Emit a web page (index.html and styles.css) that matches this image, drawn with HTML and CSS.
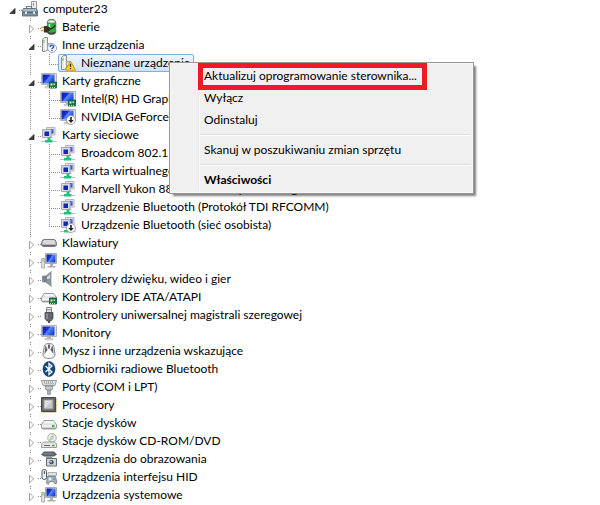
FILE: index.html
```html
<!DOCTYPE html>
<html lang="pl">
<head>
    <meta charset="UTF-8">
    <meta name="viewport" content="width=device-width, initial-scale=1.0">
    <title>Menedżer urządzeń</title>
    <link rel="stylesheet" href="styles.css">
</head>
<body>
    <!-- Icon sprite -->
    <svg class="sprite" aria-hidden="true">
        <defs>
            <linearGradient id="screen" x1="0" y1="0" x2="1" y2="0.6">
                <stop offset="0" stop-color="#0a1a9c"/>
                <stop offset="0.45" stop-color="#1633d8"/>
                <stop offset="0.55" stop-color="#5c8af5"/>
                <stop offset="1" stop-color="#1a3fe0"/>
            </linearGradient>
            <linearGradient id="metal" x1="0" y1="0" x2="0" y2="1">
                <stop offset="0" stop-color="#f4f4f4"/>
                <stop offset="1" stop-color="#a8a8a8"/>
            </linearGradient>
        </defs>
        <symbol id="arrow-closed" viewBox="0 0 8 10">
            <path d="M1.5 1v8l4-4z" fill="#fff" stroke="#a2a2a2"/>
        </symbol>
        <symbol id="arrow-open" viewBox="0 0 8 10">
            <path d="M6 2.500v5H1z" fill="#404040" stroke="#262626" stroke-width=".8"/>
        </symbol>
        <symbol id="tower" viewBox="0 0 16 16">
            <path d="M1.500 2.500l2-2h3v12l-2 2h-3z" fill="#e8e8e4" stroke="#8f8f8f"/>
            <path d="M4.500 2v11" stroke="#fff"/>
            <path d="M3 3v3" stroke="#63c043"/>
            <path d="M6.500 6.500h3.500v7H6.500z" fill="#d7d7d7" stroke="#999" stroke-width=".8"/>
        </symbol>
        <symbol id="monitor" viewBox="0 0 16 16">
            <path d="M.5.500h15v11H.5z" fill="#e4e4de" stroke="#b5b5ae"/>
            <path d="M1.500 1.500h12v9h-12z" fill="url(#screen)"/>
            <path d="M6 12h4v1.500H6z" fill="#aaa"/>
            <path d="M4 13.500h8v1.500H4z" fill="#ddd" stroke="#aaa" stroke-width=".5"/>
        </symbol>
        <symbol id="chip" viewBox="0 0 16 16">
            <path d="M8.500 9h7v6h-7z" fill="#187a4f" stroke="#0c5537" stroke-width=".8"/>
            <path d="M9.500 10.500h2v2h-2zM12.500 10.500h1.500v1.500h-1.500z" fill="#c6ecd6"/>
            <path d="M9 14.500h5" stroke="#e4d887" stroke-dasharray="1 1"/>
        </symbol>
        <symbol id="down" viewBox="0 0 16 16">
            <circle cx="11" cy="11" r="4.500" fill="#f7f7f7" stroke="#999" stroke-width=".8"/>
            <path d="M11 8v4" stroke="#222" stroke-width="1.600"/>
            <path d="M8.300 11h5.400L11 14z" fill="#222"/>
        </symbol>
        <symbol id="net" viewBox="0 0 16 16">
            <path d="M5.500.5h8.500v7.500h-8.500z" fill="#dedfe6" stroke="#b4b6c4"/>
            <path d="M7.500 2h5v4.500h-5z" fill="url(#screen)"/>
            <path d="M1.500 2.500h8.500v8H1.500z" fill="#d9dae0" stroke="#a6a8b4"/>
            <path d="M3.500 4.500h4.500V9H3.500z" fill="#1228b8"/>
            <path d="M9 9.500c0 1-1.500 1-2 1.500h5c-.5-.5-1-.5-1-1.500z" fill="#aaa"/>
            <path d="M6.500 10.500h3v2.500h2v2.500H4V13h2.500z" fill="#1fc27d"/>
            <path d="M0 14.500h4M11.500 14.500H15.500" stroke="#bcbcbc" stroke-width="1.200"/>
        </symbol>
        <symbol id="drive" viewBox="0 0 16 16">
            <path d="M3 5.500h9.500l3 4v3l-1 1.500h-13l-1-1.500v-3z" fill="url(#metal)" stroke="#858585" stroke-width=".8"/>
            <path d="M1 9.500h14v3H1z" fill="#f1f1f1"/>
            <path d="M3.500 6h8.500l2 2.500H1.700z" fill="#f5f5f5"/>
        </symbol>
        <symbol id="i-root" viewBox="0 0 16 16">
            <path d="M9.500.5h5v11h-5z" fill="#eee" stroke="#999"/>
            <path d="M11.500 2v3" stroke="#5bbd3c"/>
            <path d="M4.500 7V5.500h5v2" fill="none" stroke="#6d7a80" stroke-width="1.200"/>
            <path d="M1.500 7.500h12l2 2v5.500H.5V9.500z" fill="#78909d" stroke="#50636e" stroke-width=".8"/>
            <path d="M1.500 8.300h12l1 1.500H1z" fill="#b8cad3"/>
            <path d="M1 11.500h14" stroke="#566973"/>
            <path d="M3 10.500h2v2.500H3zM11 10.500h2v2.500h-2z" fill="#dbe4e8"/>
        </symbol>
        <symbol id="i-battery" viewBox="0 0 16 16">
            <path d="M7 1.500C7.500 0 13.500 0 14 1.500l.8 1.500v10.500c-1 2.300-7.300 2.300-8.500 0V3z" fill="#2fae3a" stroke="#4f6b4f" stroke-width=".8"/>
            <ellipse cx="10.500" cy="2.500" rx="3.600" ry="1.600" fill="#f0f0f0" stroke="#888" stroke-width=".6"/>
            <path d="M8.500 5v5" stroke="#d5f5d2" stroke-width="1.500"/>
            <path d="M6.500 12.500c1 1.500 6.500 1.500 8 0v1.500c-1.500 2-6.500 2-8 0z" fill="#444"/>
            <path d="M0 8.500h3M0 11.500h3" stroke="#d9a53c" stroke-width="1.300"/>
            <path d="M3 7h3l3 1.500v3L6 13.500H3z" fill="#3a3127"/>
            <path d="M8 10c3 0 5-1 6-4" fill="none" stroke="#2b2b2b" stroke-width="1.300"/>
        </symbol>
        <symbol id="i-other" viewBox="0 0 16 16">
            <use href="#tower"/>
            <circle cx="11" cy="11" r="4.500" fill="#f3f7fd" stroke="#8296b3" stroke-width=".8"/>
            <path d="M9.200 10c0-2.500 3.700-2.300 3.500-.3-.1 1.200-1.700 1-1.700 2.300M11 12.700v1.200" fill="none" stroke="#2356b8" stroke-width="1.400"/>
        </symbol>
        <symbol id="i-warning" viewBox="0 0 16 16">
            <use href="#tower"/>
            <path d="M10.500 6l5 9.200h-10z" fill="#fcd928" stroke="#c99a12" stroke-linejoin="round"/>
            <path d="M10.500 8.800v3.200M10.500 12.900v1.200" stroke="#332a00" stroke-width="1.300"/>
        </symbol>
        <symbol id="i-display" viewBox="0 0 16 16">
            <use href="#monitor"/>
            <use href="#chip"/>
        </symbol>
        <symbol id="i-display-off" viewBox="0 0 16 16">
            <use href="#monitor"/>
            <use href="#down"/>
        </symbol>
        <symbol id="i-net-off" viewBox="0 0 16 16">
            <use href="#net"/>
            <use href="#down"/>
        </symbol>
        <symbol id="i-keyboard" viewBox="0 0 16 16">
            <path d="M3 4.500h10c1.500 0 2.500 3 2.500 4.500 0 2-1 2.500-2 2.500h-11c-1 0-2-.5-2-2.500C.5 7.500 1.500 4.500 3 4.500z" fill="#b4b4be" stroke="#77777f"/>
            <path d="M3.500 5.500h9.500M2.500 6.500h11M2.500 7.500h11M2.500 8.500h11" stroke="#fff" stroke-dasharray="1 1"/>
            <path d="M1.500 10.500h13" stroke="#66666e"/>
        </symbol>
        <symbol id="i-computer" viewBox="0 0 16 16">
            <path d="M4.500.5h11v10h-11z" fill="#deded8" stroke="#aaaaa5"/>
            <path d="M5.500 1.500h9v8h-9z" fill="url(#screen)"/>
            <path d="M9 11h3v2H9zM6.500 13h8v1.500h-8z" fill="#aeb0ae"/>
            <path d="M.7 5.500h2.800V15H.7z" fill="#e7e7e7" stroke="#999" stroke-width=".8"/>
            <path d="M2 6.500v2" stroke="#50b53a"/>
        </symbol>
        <symbol id="i-speaker" viewBox="0 0 16 16">
            <path d="M1.500 5h3.500v6H1.500z" fill="#7c858d" stroke="#80878e" stroke-width=".8"/>
            <path d="M5 5l5.500-4.500v15L5 11z" fill="#8b949c" stroke="#6d757c" stroke-width=".8"/>
            <path d="M6 6l3-2.500v4L6 8z" fill="#d5dbe0"/>
            <path d="M10.500.5v15" stroke="#cad0d6"/>
        </symbol>
        <symbol id="i-ide" viewBox="0 0 16 16">
            <use href="#drive" y="-1"/>
            <use href="#chip"/>
        </symbol>
        <symbol id="i-usb" viewBox="0 0 16 16">
            <path d="M5.500.5h5v5h-5z" fill="#e8e8e8" stroke="#888"/>
            <path d="M7 2v1.500M9 2v1.500" stroke="#666"/>
            <path d="M4 5.500h8v6L10 14H6l-2-2.500z" fill="#62666b" stroke="#45484c" stroke-width=".8"/>
            <path d="M6 6.500V12" stroke="#a7abb0" stroke-width="1.200"/>
            <path d="M8 14v2" stroke="#555" stroke-width="2"/>
        </symbol>
        <symbol id="i-mouse" viewBox="0 0 16 16">
            <path d="M3 5C3 1 5.500.5 8 .5s5 .5 5 4.500l1 6c0 3-2 4.500-6 4.500S2 14 2 11z" fill="#eceef0" stroke="#6a6d73" stroke-width=".8"/>
            <path d="M4.500 2L6.500 7l-3 4zM11.500 2l-2 5 3 4z" fill="#5d6167"/>
            <path d="M8 1.500v4" stroke="#33363b" stroke-width="1.500"/>
            <ellipse cx="8" cy="11" rx="3" ry="3.500" fill="#fff"/>
        </symbol>
        <symbol id="i-bluetooth" viewBox="0 0 16 16">
            <ellipse cx="8" cy="8" rx="6" ry="7.500" fill="#0c4584" stroke="#082c5b" stroke-width=".6"/>
            <path d="M4.500 5l6.500 6-3 2.500v-11L11 5l-6.500 6" fill="none" stroke="#fff" stroke-width="1.300"/>
        </symbol>
        <symbol id="i-port" viewBox="0 0 16 16">
            <path d="M.5 1.500h15l-1.500 5h-12z" fill="#e1e4e6" stroke="#82888c" stroke-width=".8"/>
            <path d="M3 3h10M3.500 4.800h9" stroke="#777" stroke-dasharray="1 1"/>
            <path d="M4 7h8l-1 4H5z" fill="#c4c9cc" stroke="#81878b" stroke-width=".8"/>
            <path d="M6.500 11h3v4.500h-3z" fill="#a7adb1" stroke="#81878b" stroke-width=".6"/>
        </symbol>
        <symbol id="i-cpu" viewBox="0 0 16 16">
            <path d="M1.500 15.300h14M15.300 1.500v14" stroke="#d3a73a" stroke-width="1.400" stroke-dasharray="1 1"/>
            <path d="M.5.5h14v14H.5z" fill="#66696d" stroke="#44474a"/>
            <path d="M3 3h9v9H3z" fill="#c3c5c7" stroke="#8e9194"/>
            <path d="M3.500 11.500l8-8h-8z" fill="#dcdddf"/>
        </symbol>
        <symbol id="i-disk" viewBox="0 0 16 16">
            <use href="#drive"/>
            <path d="M11 11h2.500" stroke="#35b53a" stroke-width="2"/>
        </symbol>
        <symbol id="i-cdrom" viewBox="0 0 16 16">
            <circle cx="11" cy="4.800" r="4.300" fill="#eef0ee" stroke="#999" stroke-width=".8"/>
            <path d="M11 5l2-4M11 5l-3 3" stroke="#a9d7a9" stroke-width="1.500"/>
            <circle cx="11" cy="4.800" r="1.300" fill="#fff" stroke="#888" stroke-width=".6"/>
            <path d="M2.500 9h11l2 2v3.500H.5V11z" fill="#e6e6e6" stroke="#858585" stroke-width=".8"/>
            <path d="M3 12.500h6" stroke="#666"/>
            <path d="M11 12.500h2.500" stroke="#35b53a" stroke-width="1.500"/>
        </symbol>
        <symbol id="i-camera" viewBox="0 0 16 16">
            <path d="M0 3.500L3 .5h10l3 3-3 2H3z" fill="#596066"/>
            <path d="M3 2h9l1 1.500H2z" fill="#7b858d"/>
            <path d="M5 5.500h6v2H5z" fill="#8b9297"/>
            <path d="M5.500 7.500h10v7.500h-10z" fill="#cdd2d6" stroke="#666e74"/>
            <circle cx="10.500" cy="11.200" r="2.700" fill="#3d5263" stroke="#eef1f3" stroke-width=".8"/>
            <circle cx="10" cy="10.700" r="1" fill="#a9d0e8"/>
        </symbol>
        <symbol id="i-hid" viewBox="0 0 16 16">
            <rect x="1" y=".5" width="4.500" height="10" rx="2" fill="#eceef0" stroke="#555b61"/>
            <path d="M3.300 2v3" stroke="#444"/>
            <path d="M7 3.500h8.500v3H7z" fill="#dfe3e6" stroke="#9aa2a8" stroke-width=".8"/>
            <path d="M6.500 7.500h8L16 14l-2 1-1.500-2.500H9L7 15.500 5.500 14z" fill="#a8b2ba" stroke="#6c757c" stroke-width=".8"/>
            <path d="M7.500 10h3M9 8.500v3" stroke="#fff"/>
            <circle cx="13" cy="10" r="1" fill="#4f93c9"/>
        </symbol>
    </svg>

    <ul class="tree">
        <li>
            <div class="row">
                <button class="toggle" aria-label="Zwiń"><svg><use href="#arrow-open"/></svg></button>
                <span class="item"><svg class="icon"><use href="#i-root"/></svg>computer23</span>
            </div>
            <ul class="branch">
                <li>
                    <div class="row">
                        <button class="toggle" aria-label="Rozwiń"><svg><use href="#arrow-closed"/></svg></button>
                        <span class="item"><svg class="icon"><use href="#i-battery"/></svg>Baterie</span>
                    </div>
                </li>
                <li>
                    <div class="row">
                        <button class="toggle" aria-label="Zwiń"><svg><use href="#arrow-open"/></svg></button>
                        <span class="item"><svg class="icon"><use href="#i-other"/></svg>Inne urządzenia</span>
                    </div>
                    <ul class="branch">
                        <li>
                            <div class="row leaf">
                                <span class="item selected"><svg class="icon"><use href="#i-warning"/></svg>Nieznane urządzenie</span>
                            </div>
                        </li>
                    </ul>
                </li>
                <li>
                    <div class="row">
                        <button class="toggle" aria-label="Zwiń"><svg><use href="#arrow-open"/></svg></button>
                        <span class="item"><svg class="icon"><use href="#i-display"/></svg>Karty graficzne</span>
                    </div>
                    <ul class="branch">
                        <li>
                            <div class="row leaf">
                                <span class="item"><svg class="icon"><use href="#i-display"/></svg>Intel(R) HD Graphics</span>
                            </div>
                        </li>
                        <li>
                            <div class="row leaf">
                                <span class="item"><svg class="icon"><use href="#i-display-off"/></svg>NVIDIA GeForce 310M</span>
                            </div>
                        </li>
                    </ul>
                </li>
                <li>
                    <div class="row">
                        <button class="toggle" aria-label="Zwiń"><svg><use href="#arrow-open"/></svg></button>
                        <span class="item"><svg class="icon"><use href="#net"/></svg>Karty sieciowe</span>
                    </div>
                    <ul class="branch">
                        <li>
                            <div class="row leaf">
                                <span class="item"><svg class="icon"><use href="#net"/></svg>Broadcom 802.11n</span>
                            </div>
                        </li>
                        <li>
                            <div class="row leaf">
                                <span class="item"><svg class="icon"><use href="#net"/></svg>Karta wirtualnego</span>
                            </div>
                        </li>
                        <li>
                            <div class="row leaf">
                                <span class="item"><svg class="icon"><use href="#net"/></svg>Marvell Yukon 88E8057 Family PCI-E Gigabit</span>
                            </div>
                        </li>
                        <li>
                            <div class="row leaf">
                                <span class="item"><svg class="icon"><use href="#net"/></svg>Urządzenie Bluetooth (Protokół TDI RFCOMM)</span>
                            </div>
                        </li>
                        <li>
                            <div class="row leaf">
                                <span class="item"><svg class="icon"><use href="#i-net-off"/></svg>Urządzenie Bluetooth (sieć osobista)</span>
                            </div>
                        </li>
                    </ul>
                </li>
                <li>
                    <div class="row">
                        <button class="toggle" aria-label="Rozwiń"><svg><use href="#arrow-closed"/></svg></button>
                        <span class="item"><svg class="icon"><use href="#i-keyboard"/></svg>Klawiatury</span>
                    </div>
                </li>
                <li>
                    <div class="row">
                        <button class="toggle" aria-label="Rozwiń"><svg><use href="#arrow-closed"/></svg></button>
                        <span class="item"><svg class="icon"><use href="#i-computer"/></svg>Komputer</span>
                    </div>
                </li>
                <li>
                    <div class="row">
                        <button class="toggle" aria-label="Rozwiń"><svg><use href="#arrow-closed"/></svg></button>
                        <span class="item"><svg class="icon"><use href="#i-speaker"/></svg>Kontrolery dźwięku, wideo i gier</span>
                    </div>
                </li>
                <li>
                    <div class="row">
                        <button class="toggle" aria-label="Rozwiń"><svg><use href="#arrow-closed"/></svg></button>
                        <span class="item"><svg class="icon"><use href="#i-ide"/></svg>Kontrolery IDE ATA/ATAPI</span>
                    </div>
                </li>
                <li>
                    <div class="row">
                        <button class="toggle" aria-label="Rozwiń"><svg><use href="#arrow-closed"/></svg></button>
                        <span class="item"><svg class="icon"><use href="#i-usb"/></svg>Kontrolery uniwersalnej magistrali szeregowej</span>
                    </div>
                </li>
                <li>
                    <div class="row">
                        <button class="toggle" aria-label="Rozwiń"><svg><use href="#arrow-closed"/></svg></button>
                        <span class="item"><svg class="icon"><use href="#monitor"/></svg>Monitory</span>
                    </div>
                </li>
                <li>
                    <div class="row">
                        <button class="toggle" aria-label="Rozwiń"><svg><use href="#arrow-closed"/></svg></button>
                        <span class="item"><svg class="icon"><use href="#i-mouse"/></svg>Mysz i inne urządzenia wskazujące</span>
                    </div>
                </li>
                <li>
                    <div class="row">
                        <button class="toggle" aria-label="Rozwiń"><svg><use href="#arrow-closed"/></svg></button>
                        <span class="item"><svg class="icon"><use href="#i-bluetooth"/></svg>Odbiorniki radiowe Bluetooth</span>
                    </div>
                </li>
                <li>
                    <div class="row">
                        <button class="toggle" aria-label="Rozwiń"><svg><use href="#arrow-closed"/></svg></button>
                        <span class="item"><svg class="icon"><use href="#i-port"/></svg>Porty (COM i LPT)</span>
                    </div>
                </li>
                <li>
                    <div class="row">
                        <button class="toggle" aria-label="Rozwiń"><svg><use href="#arrow-closed"/></svg></button>
                        <span class="item"><svg class="icon"><use href="#i-cpu"/></svg>Procesory</span>
                    </div>
                </li>
                <li>
                    <div class="row">
                        <button class="toggle" aria-label="Rozwiń"><svg><use href="#arrow-closed"/></svg></button>
                        <span class="item"><svg class="icon"><use href="#i-disk"/></svg>Stacje dysków</span>
                    </div>
                </li>
                <li>
                    <div class="row">
                        <button class="toggle" aria-label="Rozwiń"><svg><use href="#arrow-closed"/></svg></button>
                        <span class="item"><svg class="icon"><use href="#i-cdrom"/></svg>Stacje dysków CD-ROM/DVD</span>
                    </div>
                </li>
                <li>
                    <div class="row">
                        <button class="toggle" aria-label="Rozwiń"><svg><use href="#arrow-closed"/></svg></button>
                        <span class="item"><svg class="icon"><use href="#i-camera"/></svg>Urządzenia do obrazowania</span>
                    </div>
                </li>
                <li>
                    <div class="row">
                        <button class="toggle" aria-label="Rozwiń"><svg><use href="#arrow-closed"/></svg></button>
                        <span class="item"><svg class="icon"><use href="#i-hid"/></svg>Urządzenia interfejsu HID</span>
                    </div>
                </li>
                <li>
                    <div class="row">
                        <button class="toggle" aria-label="Rozwiń"><svg><use href="#arrow-closed"/></svg></button>
                        <span class="item"><svg class="icon"><use href="#i-computer"/></svg>Urządzenia systemowe</span>
                    </div>
                </li>
            </ul>
        </li>
    </ul>

    <div class="context-menu" role="menu">
        <button class="menu-item highlighted" role="menuitem">Aktualizuj oprogramowanie sterownika...</button>
        <button class="menu-item" role="menuitem">Wyłącz</button>
        <button class="menu-item" role="menuitem">Odinstaluj</button>
        <hr class="separator">
        <button class="menu-item" role="menuitem">Skanuj w poszukiwaniu zmian sprzętu</button>
        <hr class="separator">
        <button class="menu-item default" role="menuitem">Właściwości</button>
    </div>
</body>
</html>
```
FILE: styles.css
```css
:root {
    --line: #8c8c8c;
    --menu-bg: #f0f0f0;
    --menu-border: #979797;
    --mark: #ed1c24;
}

*,
*::after {
    margin: 0;
    padding: 0;
    box-sizing: border-box;
}

body {
    font-family: Lato, "Open Sans", sans-serif;
    font-size: 12px;
    line-height: 18px;
    color: #000;
    background: #fff;
}

button {
    font: inherit;
    color: inherit;
    border: none;
    background: none;
}

.sprite {
    position: absolute;
    width: 0;
    height: 0;
}

/* Tree */
.tree {
    list-style: none;
    padding-left: 2px;
}

.branch {
    list-style: none;
    padding-left: 19px;
}

.branch > li {
    background: repeating-linear-gradient(to bottom, var(--line) 0 1px, transparent 1px 2px) 9px 0 / 1px 100% no-repeat;
}

.branch > li:last-child {
    background-size: 1px 10px;
}

.row {
    display: flex;
    align-items: center;
    height: 18px;
    background: repeating-linear-gradient(to right, var(--line) 0 1px, transparent 1px 2px) 9px 10px / 11px 1px no-repeat;
}

.toggle {
    display: flex;
    align-items: center;
    width: 9px;
    height: 13px;
    margin: 3px 2px 0 7px;
    background: #fff;
    cursor: pointer;
}

.toggle svg {
    width: 8px;
    height: 10px;
}

.leaf {
    padding-left: 18px;
}

.item {
    display: flex;
    align-items: center;
    gap: 5px;
    height: 18px;
    padding: 0 3px 0 1px;
    border: 1px solid transparent;
    border-radius: 2px;
    white-space: nowrap;
}

.selected {
    border-color: #84acdd;
    background: linear-gradient(#eef5fd, #cfe3fb);
}

.icon {
    width: 16px;
    height: 16px;
    flex: none;
}

/* Context menu */
.context-menu {
    position: absolute;
    left: 169px;
    top: 62px;
    min-width: 305px;
    padding: 2px;
    border: 1px solid var(--menu-border);
    background: linear-gradient(to right, #e6e6e6 1px, #f9f9f9 1px) 28px 2px / 2px 126px no-repeat, var(--menu-bg);
    box-shadow: inset 0 0 0 1px #f6f6f6, 3px 3px 2px -1px rgba(0, 0, 0, 0.5);
}

.menu-item {
    display: block;
    position: relative;
    width: 100%;
    height: 22px;
    padding-left: 32px;
    text-align: left;
    white-space: nowrap;
}

.default {
    font-weight: 700;
}

.highlighted::after {
    content: "";
    position: absolute;
    left: 26px;
    top: -2px;
    width: 229px;
    height: 27px;
    border: 5px solid var(--mark);
}

.separator {
    height: 2px;
    margin: 3px 0 3px 28px;
    border: none;
    border-top: 1px solid #dfdfdf;
    border-bottom: 1px solid #fff;
}
```
